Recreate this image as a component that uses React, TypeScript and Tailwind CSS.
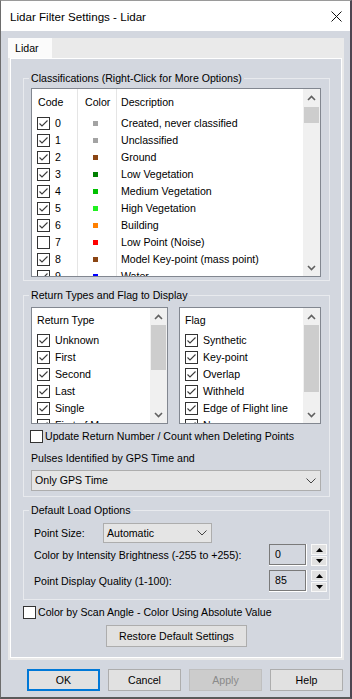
import React from "react";

function ChevUp() {
  return (
    <svg width="9" height="6" viewBox="0 0 9 6" className="block">
      <path d="M1 5L4.5 1.5L8 5" fill="none" stroke="#606060" strokeWidth="1.6" />
    </svg>
  );
}
function ChevDown() {
  return (
    <svg width="9" height="6" viewBox="0 0 9 6" className="block">
      <path d="M1 1L4.5 4.5L8 1" fill="none" stroke="#606060" strokeWidth="1.6" />
    </svg>
  );
}
function ComboChev() {
  return (
    <svg width="10" height="6" viewBox="0 0 10 6" className="block">
      <path d="M0.5 0.5L5 5L9.5 0.5" fill="none" stroke="#444" strokeWidth="1" />
    </svg>
  );
}

function ScrollBar({ thumb }: { thumb: string }) {
  return (
    <div className="w-[17px] shrink-0 h-full bg-[#f0f0f0] flex flex-col">
      <div className="h-[17px] shrink-0 flex items-center justify-center">
        <ChevUp />
      </div>
      <div className="flex-1">
        <div className={"mx-[1px] bg-[#cdcdcd] " + thumb} />
      </div>
      <div className="h-[17px] shrink-0 flex items-center justify-center">
        <ChevDown />
      </div>
    </div>
  );
}

function Check({ checked }: { checked: boolean }) {
  return (
    <svg width="13" height="13" viewBox="0 0 13 13" className="block shrink-0">
      <rect x="0.5" y="0.5" width="12" height="12" fill="#fff" stroke="#333" />
      {checked && (
        <path d="M2.5 6.5L5 9L10.5 3.5" fill="none" stroke="#3a3a3a" strokeWidth="1.1" />
      )}
    </svg>
  );
}

const classes: [string, string, string, boolean][] = [
  ["0", "#a3a3a3", "Created, never classified", true],
  ["1", "#a3a3a3", "Unclassified", true],
  ["2", "#8b4513", "Ground", true],
  ["3", "#008000", "Low Vegetation", true],
  ["4", "#00c000", "Medium Vegetation", true],
  ["5", "#20f020", "High Vegetation", true],
  ["6", "#ff8000", "Building", true],
  ["7", "#ff0000", "Low Point (Noise)", false],
  ["8", "#8b4513", "Model Key-point (mass point)", true],
  ["9", "#0000ff", "Water", true],
];

const returns = ["Unknown", "First", "Second", "Last", "Single", "First of Many"];
const flags = ["Synthetic", "Key-point", "Overlap", "Withheld", "Edge of Flight line", "None"];

function CheckList({ title, items, width, pad, thumb }: { title: string; items: string[]; width: string; pad: string; thumb: string }) {
  return (
    <div className={"h-[117px] border border-[#828790] bg-white flex overflow-hidden " + width}>
      <div className="flex-1 overflow-hidden">
        <div className={"h-[24px] flex items-center " + pad}>{title}</div>
        {items.map((t) => (
          <div key={t} className={"h-[17px] flex items-center gap-[5px] whitespace-nowrap " + pad}>
            <Check checked />
            <span>{t}</span>
          </div>
        ))}
      </div>
      <ScrollBar thumb={thumb} />
    </div>
  );
}

function Spinner() {
  return (
    <div className="flex flex-col gap-[1px] w-[16px]">
      <div className="h-[11px] border border-[#f8f8f8] bg-[#e1e1e1] flex items-center justify-center">
        <svg width="7" height="4" viewBox="0 0 7 4" className="block">
          <path d="M0 4L3.5 0L7 4Z" fill="#000" />
        </svg>
      </div>
      <div className="h-[10px] border border-[#f8f8f8] bg-[#e1e1e1] flex items-center justify-center">
        <svg width="7" height="4" viewBox="0 0 7 4" className="block">
          <path d="M0 0L3.5 4L7 0Z" fill="#000" />
        </svg>
      </div>
    </div>
  );
}

function NumInput({ value }: { value: string }) {
  return (
    <div className="flex items-center gap-[4px]">
      <div className="w-[38px] h-[22px] border-r border-b border-white">
        <div className="h-full border border-[#7a7a7a] flex items-center pl-[5px]">{value}</div>
      </div>
      <Spinner />
    </div>
  );
}

function Btn({ children, cls }: { children: React.ReactNode; cls: string }) {
  return <div className={"w-[73px] h-[22px] flex items-center justify-center " + cls}>{children}</div>;
}

export default function App() {
  return (
    <div className="w-[352px] h-[699px] overflow-hidden bg-[#d3d7df] border-t border-l border-r-2 border-b-2 border-t-[#9a9a9a] border-l-[#6d6d6d] border-r-[#4d4551] border-b-[#5a5a5a] text-[10.6px] leading-[13px] text-black font-['Liberation_Sans',Arial,sans-serif] flex flex-col">
      {/* title bar */}
      <div className="h-[30px] shrink-0 bg-white flex items-center justify-between pl-[9px] pr-[8px]">
        <span className="text-[11.6px]">Lidar Filter Settings - Lidar</span>
        <svg width="11" height="11" viewBox="0 0 11 11" className="block">
          <path d="M0.5 0.5L10.5 10.5M10.5 0.5L0.5 10.5" stroke="#111" strokeWidth="1" />
        </svg>
      </div>

      {/* tab control */}
      <div className="ml-[7px] mt-[7px] w-[336px] h-[622px] bg-[#eaeaea] flex flex-col shrink-0">
        <div className="h-[20px] flex shrink-0">
          <div className="w-[44px] bg-[#fbfbfb] pl-[7px] flex items-center">Lidar</div>
        </div>
        <div className="mx-[2px] h-[600px] border border-white bg-[#d3d7df] flex flex-col pl-[12px] pr-[11px]">
          {/* Classifications */}
          <fieldset className="mt-[13px] border border-[#e8eaee]">
            <legend className="ml-[5px] px-[2px] leading-[13px]">Classifications (Right-Click for More Options)</legend>
            <div className="pl-[7px] pr-[8px] pb-[3px] pt-[3px]">
              <div className="w-[290px] h-[189px] border border-[#828790] bg-white flex overflow-hidden">
                <div className="flex-1 overflow-hidden">
                  <div className="h-[26px] flex">
                    <div className="w-[46px] border-r border-[#e5e5e5] pl-[6px] flex items-center">Code</div>
                    <div className="w-[39px] border-r border-[#e5e5e5] pl-[7px] flex items-center">Color</div>
                    <div className="pl-[4px] flex items-center">Description</div>
                  </div>
                  {classes.map(([code, color, desc, on]) => (
                    <div key={code} className="h-[17px] flex">
                      <div className="w-[46px] border-r border-[#e5e5e5] pl-[5px] flex items-center gap-[5px]">
                        <Check checked={on} />
                        <span>{code}</span>
                      </div>
                      <div className="w-[39px] border-r border-[#e5e5e5] pl-[15px] flex items-center">
                        <div className="w-[5px] h-[5px]" style={{ backgroundColor: color }} />
                      </div>
                      <div className="pl-[4px] flex items-center whitespace-nowrap">{desc}</div>
                    </div>
                  ))}
                </div>
                <ScrollBar thumb="mt-[1px] h-[16px]" />
              </div>
            </div>
          </fieldset>

          {/* Return types */}
          <fieldset className="mt-[8px] border border-[#e8eaee]">
            <legend className="ml-[5px] px-[2px] leading-[13px]">Return Types and Flag to Display</legend>
            <div className="pl-[7px] pr-[8px] pb-[5px]">
              <div className="flex gap-[11px] mt-[5px]">
                <CheckList title="Return Type" items={returns} width="w-[137px]" pad="pl-[5px]" thumb="h-[45px]" />
                <CheckList title="Flag" items={flags} width="w-[142px]" pad="pl-[5px]" thumb="h-[67px]" />
              </div>
              <div className="mt-[6px] flex items-center gap-[2px] -ml-[1px] h-[13px]">
                <Check checked={false} />
                <span>Update Return Number / Count when Deleting Points</span>
              </div>
              <div className="mt-[9px]">Pulses Identified by GPS Time and</div>
              <div className="mt-[5px] h-[21px] border border-[#adadad] bg-[#e5e5e5] flex items-center justify-between pl-[3px] pr-[4px]">
                <span>Only GPS Time</span>
                <ComboChev />
              </div>
            </div>
          </fieldset>

          {/* Default load options */}
          <fieldset className="mt-[7px] border border-[#e8eaee]">
            <legend className="ml-[5px] px-[2px] leading-[13px]">Default Load Options</legend>
            <div className="pl-[10px] pr-[2px] pb-[7px]">
              <div className="mt-[6px] h-[20px] flex items-center">
                <span className="w-[69px]">Point Size:</span>
                <div className="w-[109px] h-[20px] border border-[#adadad] bg-[#e5e5e5] flex items-center justify-between pl-[3px] pr-[4px]">
                  <span>Automatic</span>
                  <ComboChev />
                </div>
              </div>
              <div className="mt-[1px] flex items-center justify-between">
                <span>Color by Intensity Brightness (-255 to +255):</span>
                <NumInput value="0" />
              </div>
              <div className="mt-[4px] flex items-center justify-between">
                <span>Point Display Quality (1-100):</span>
                <NumInput value="85" />
              </div>
            </div>
          </fieldset>

          <div className="mt-[6px] flex items-center gap-[2px] h-[13px]">
            <Check checked={false} />
            <span>Color by Scan Angle - Color Using Absolute Value</span>
          </div>
          <div className="mt-[6px] flex justify-center">
            <div className="w-[141px] h-[22px] border border-[#adadad] bg-[#e1e1e1] flex items-center justify-center">
              Restore Default Settings
            </div>
          </div>
        </div>
      </div>

      {/* bottom buttons */}
      <div className="flex ml-[26px] mt-[9px] gap-[8px]">
        <Btn cls="border-2 border-[#0078d7] bg-[#e1e1e1]">OK</Btn>
        <Btn cls="border border-[#adadad] bg-[#e1e1e1]">Cancel</Btn>
        <Btn cls="border border-[#bfbfbf] bg-[#cccccc] text-[#8a8a8a]">Apply</Btn>
        <Btn cls="border border-[#adadad] bg-[#e1e1e1]">Help</Btn>
      </div>
    </div>
  );
}
